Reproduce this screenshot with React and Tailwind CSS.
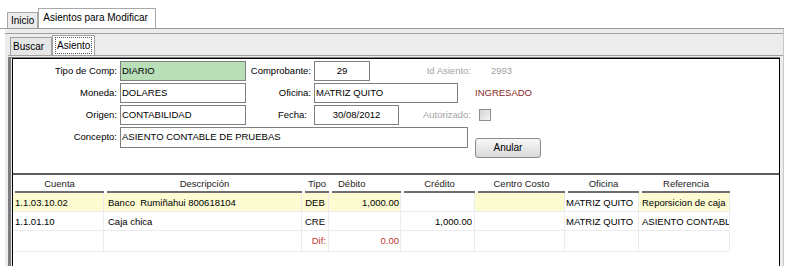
import React from 'react';

const rows = [
  {
    cuenta: '1.1.03.10.02',
    desc: 'Banco  Rumiñahui 800618104',
    tipo: 'DEB',
    debito: '1,000.00',
    credito: '',
    oficina: 'MATRIZ QUITO',
    ref: 'Reporsicion de caja',
    hl: true,
  },
  {
    cuenta: '1.1.01.10',
    desc: 'Caja chica',
    tipo: 'CRE',
    debito: '',
    credito: '1,000.00',
    oficina: 'MATRIZ QUITO',
    ref: 'ASIENTO CONTABL',
    hl: false,
  },
];

function Field({ children, className = '' }) {
  return (
    <div className={`h-[20px] border border-[#7f7f7f] leading-[18px] px-[1px] whitespace-nowrap overflow-hidden ${className}`}>
      {children}
    </div>
  );
}

function Label({ children, className = '' }) {
  return <div className={`text-right leading-[20px] whitespace-nowrap ${className}`}>{children}</div>;
}

function Head({ children, className = '', inner = 'text-center', first }) {
  return (
    <div className={`h-[16px] ${className}`}>
      <div className={`h-full border-b-2 border-[#6e6e6e] leading-[13px] text-[#222] ${inner} ${first ? 'ml-[2px]' : 'ml-[3px]'}`}>
        {children}
      </div>
    </div>
  );
}

export default function App() {
  const yellow = 'bg-[#fcfbd2]';
  const cell = 'h-full border-r border-[#ececec] leading-[19px] whitespace-nowrap overflow-hidden';

  return (
    <div className="w-[800px] h-[277px] bg-white overflow-hidden text-[9.5px] text-black" style={{ fontFamily: '"Liberation Sans", Arial, sans-serif' }}>
      {/* top tabs */}
      <div className="h-[29px] pt-[8px] pl-[7px] flex items-end border-b border-[#9c9c9c] w-[784px]">
        <div className="h-[16px] px-[3px] border border-b-0 border-[#a8a8a8] bg-[#ececec] leading-[15px] text-[10px] whitespace-nowrap">Inicio</div>
        <div className="h-[20px] w-[118px] px-[4px] border border-b-0 border-[#a8a8a8] bg-white leading-[17px] text-[10px] whitespace-nowrap">Asientos para Modificar</div>
      </div>

      {/* outer panel */}
      <div className="ml-[5px] w-[779px] h-[237px] bg-[#ececec] border-r border-[#c8c8c8] pt-[4px]">
        <div className="border-t border-[#a0a0a0] pt-[1px] pl-[3px]">
          <div className="flex items-end h-[21px] pl-[2px] border-b border-[#a0a0a0]">
            <div className="h-[18px] w-[42px] px-[2px] border border-b-0 border-[#a0a0a0] bg-[#e6e6e6] leading-[17px] text-[10px]">Buscar</div>
            <div className="h-[20px] px-[2px] pt-[1px] border border-b-0 border-[#a0a0a0] bg-white text-[10px]">
              <div className="border border-dotted border-[#555] leading-[15px] px-[1px]">Asiento</div>
            </div>
          </div>

          {/* inner panel */}
          <div className="mt-[1px] w-[772px] border-l-[3px] border-t border-[#7d7d7d] h-[209px]">
            <div className="ml-[1px] h-full border-l border-t border-r border-black bg-white">
              {/* form */}
              <div className="h-[114px] pt-[2px] flex flex-col gap-[2px]">
                <div className="flex items-center h-[20px]">
                  <Label className="w-[104px]">Tipo de Comp:</Label>
                  <Field className="ml-[3px] w-[126px] bg-[#b9dfb9]">DIARIO</Field>
                  <Label className="w-[65px]">Comprobante:</Label>
                  <Field className="ml-[3px] w-[56px] bg-white text-center">29</Field>
                  <Label className="ml-[3px] w-[98px] text-[#a3a3a3]">Id Asiento:</Label>
                  <div className="ml-[20px] text-[#a3a3a3]">2993</div>
                </div>
                <div className="flex items-center h-[20px]">
                  <Label className="w-[104px]">Moneda:</Label>
                  <Field className="ml-[3px] w-[126px] bg-white">DOLARES</Field>
                  <Label className="w-[65px]">Oficina:</Label>
                  <Field className="ml-[3px] w-[144px] bg-white">MATRIZ QUITO</Field>
                  <div className="ml-[17px] text-[#8b1f1f]">INGRESADO</div>
                </div>
                <div className="flex items-center h-[20px]">
                  <Label className="w-[104px]">Origen:</Label>
                  <Field className="ml-[3px] w-[126px] bg-white">CONTABILIDAD</Field>
                  <Label className="w-[61px]">Fecha:</Label>
                  <Field className="ml-[7px] w-[85px] bg-white text-center">30/08/2012</Field>
                  <Label className="ml-[19px] w-[53px] text-[#a3a3a3]">Autorizado:</Label>
                  <div className="ml-[8px] w-[12px] h-[12px] border border-[#8e8e8e] bg-gradient-to-br from-[#d4d4d4] to-[#f4f4f4]" />
                </div>
                <div className="flex items-start h-[32px]">
                  <Label className="w-[104px]">Concepto:</Label>
                  <Field className="ml-[3px] w-[348px] h-[21px] bg-white">ASIENTO CONTABLE DE PRUEBAS</Field>
                  <button className="ml-[7px] mt-[11px] w-[66px] h-[20px] rounded-[3px] border border-[#8a8a8a] bg-gradient-to-b from-[#f8f8f8] to-[#d9d9d9] text-[10px] leading-[18px] text-black">
                    Anular
                  </button>
                </div>
              </div>

              {/* separator */}
              <div className="h-[2px] bg-[#5e5e5e]" />

              {/* table */}
              <div className="pt-[2px]">
                <div className="flex">
                  <Head first className="w-[91px]">Cuenta</Head>
                  <Head className="w-[198px]">Descripción</Head>
                  <Head className="w-[27px]">Tipo</Head>
                  <Head className="w-[72px]" inner="text-left pl-[6px]">Débito</Head>
                  <Head className="w-[74px]">Crédito</Head>
                  <Head className="w-[90px]">Centro Costo</Head>
                  <Head className="w-[74px]">Oficina</Head>
                  <Head className="w-[91px]">Referencia</Head>
                </div>
                {rows.map((r) => (
                  <div key={r.cuenta} className="flex h-[19px] border-b border-[#ececec] w-[717px]">
                    <div className={`${cell} w-[91px] pl-[2px] ${r.hl ? yellow : ''}`}>{r.cuenta}</div>
                    <div className={`${cell} w-[198px] pl-[4px] ${r.hl ? yellow : ''}`}><span className="whitespace-pre">{r.desc}</span></div>
                    <div className={`${cell} w-[27px] text-center ${r.hl ? yellow : ''}`}>{r.tipo}</div>
                    <div className={`${cell} w-[72px] text-right pr-[1px] ${r.hl ? yellow : ''}`}>{r.debito}</div>
                    <div className={`${cell} w-[74px] text-right pr-[2px]`}>{r.credito}</div>
                    <div className={`${cell} w-[90px] ${r.hl ? yellow : ''}`}></div>
                    <div className={`${cell} w-[74px] pl-[1px]`}>{r.oficina}</div>
                    <div className={`${cell} w-[91px] pl-[3px] ${r.hl ? yellow : ''}`}>{r.ref}</div>
                  </div>
                ))}
                <div className="flex h-[21px] border-b border-[#ececec] w-[717px]">
                  <div className={`${cell} w-[91px]`}></div>
                  <div className={`${cell} w-[198px]`}></div>
                  <div className={`${cell} w-[27px] text-right pr-[2px] text-[#c03434]`}>Dif:</div>
                  <div className={`${cell} w-[72px] text-right pr-[1px] text-[#c03434]`}>0.00</div>
                  <div className={`${cell} w-[74px]`}></div>
                  <div className={`${cell} w-[90px]`}></div>
                  <div className={`${cell} w-[74px]`}></div>
                  <div className={`${cell} w-[91px]`}></div>
                </div>
              </div>
            </div>
          </div>
        </div>
      </div>
    </div>
  );
}
